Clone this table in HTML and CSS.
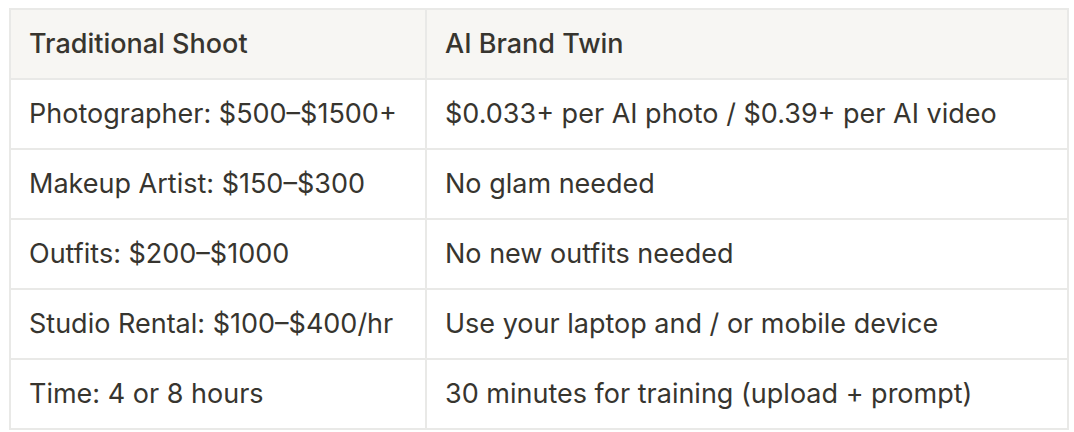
FILE: index.html
```html
<!DOCTYPE html>
<html>
<head>
<meta charset="utf-8">
<link rel="stylesheet" href="styles.css">
</head>
<body>
<table class="cmp">
  <colgroup><col class="c1"><col class="c2"></colgroup>
  <thead>
    <tr><th>Traditional Shoot</th><th>AI Brand Twin</th></tr>
  </thead>
  <tbody>
    <tr><td>Photographer: $500–$1500+</td><td>$0.033+ per AI photo / $0.39+ per AI video</td></tr>
    <tr><td>Makeup Artist: $150–$300</td><td>No glam needed</td></tr>
    <tr><td>Outfits: $200–$1000</td><td>No new outfits needed</td></tr>
    <tr><td>Studio Rental: $100–$400/hr</td><td>Use your laptop and / or mobile device</td></tr>
    <tr><td>Time: 4 or 8 hours</td><td>30 minutes for training (upload + prompt)</td></tr>
  </tbody>
</table>
</body>
</html>
```
FILE: styles.css
```css
html, body { margin: 0; background: #ffffff; }
body { padding: 8px 9px; }
.cmp {
  border-collapse: collapse;
  table-layout: fixed;
  width: 1058px;
  font-family: Inter, "Noto Sans", sans-serif;
  font-size: 27px;
  color: #37352f;
}
.c1 { width: 416px; }
.c2 { width: 642px; }
.cmp th, .cmp td {
  border: 2px solid #e9e9e7;
  height: 70px;
  padding: 0 18px;
  text-align: left;
  vertical-align: middle;
  line-height: 40px;
  white-space: nowrap;
  box-sizing: border-box;
}
.cmp th { background: #f7f6f3; font-weight: 550; }
.cmp td { font-weight: 400; }
```
